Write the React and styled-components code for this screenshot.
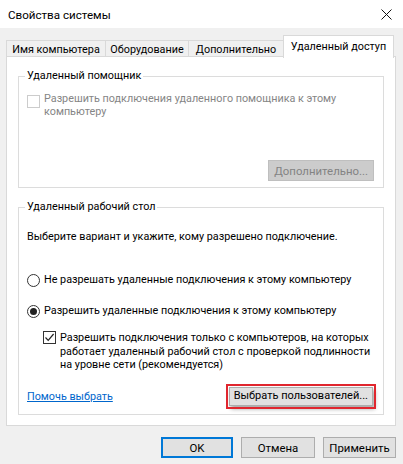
import React from "react";
import styled, { createGlobalStyle } from "styled-components";

const GlobalStyle = createGlobalStyle`
  html, body { margin: 0; padding: 0; }
  body {
    background: #f0f0f0;
    font-family: Roboto, "Liberation Sans", Arial, sans-serif;
    font-size: 10.8px;
    color: #000;
  }
  * { box-sizing: border-box; }
`;

const Window = styled.div`
  width: 403px;
  height: 464px;
  display: flex;
  flex-direction: column;
  background: #f0f0f0;
  overflow: hidden;
`;

const TitleBar = styled.div`
  height: 28px;
  background: #fff;
  display: flex;
  align-items: center;
  justify-content: space-between;
  padding: 1px 11px 0 8px;
  flex-shrink: 0;
`;

const Title = styled.span`
  font-size: 11.6px;
  line-height: 14px;
`;

const Body = styled.div`
  padding: 7px 7px 0 6px;
  display: flex;
  flex-direction: column;
`;

const TabStrip = styled.div`
  display: flex;
  align-items: flex-end;
  height: 22px;
`;

const Tab = styled.div`
  width: ${(p) => p.$w}px;
  height: ${(p) => (p.$active ? 23 : 17)}px;
  margin-left: ${(p) => (p.$active ? "-1px" : "0")};
  display: flex;
  justify-content: center;
  align-items: flex-start;
  padding-top: ${(p) => (p.$active ? "4px" : "2px")};
  line-height: 14px;
  white-space: nowrap;
  background: ${(p) => (p.$active ? "#fff" : "#f0f0f0")};
  border: 1px solid #d9d9d9;
  border-left-width: ${(p) => (p.$first || p.$active ? "1px" : "0")};
  border-bottom: ${(p) => (p.$active ? "none" : "1px solid #d9d9d9")};
  position: relative;
  z-index: ${(p) => (p.$active ? 2 : 0)};
  margin-bottom: ${(p) => (p.$active ? "-1px" : "0")};
`;

const Panel = styled.div`
  background: #fff;
  border: 1px solid #d9d9d9;
  height: 370px;
  margin-top: -1px;
  padding: 12px 11px 0 11px;
  display: flex;
  flex-direction: column;
  gap: 12px;
`;

const Group = styled.fieldset`
  margin: 0;
  min-width: 0;
  border: 1px solid #dcdcdc;
  padding: 0 9px ${(p) => p.$pb}px 8px;
  display: flex;
  flex-direction: column;
`;

const Legend = styled.legend`
  padding: 0 2px;
  margin-left: -2px;
  line-height: 14px;
`;

const Row = styled.div`
  display: flex;
  align-items: ${(p) => (p.$top ? "flex-start" : "center")};
  gap: 4px;
  margin-top: ${(p) => p.$mt || 0}px;
  margin-left: ${(p) => p.$indent || 0}px;
  line-height: ${(p) => p.$lh || 14}px;
  color: ${(p) => (p.$disabled ? "#858585" : "#000")};
  white-space: nowrap;
`;

const Box = styled.span`
  width: 13px;
  height: 13px;
  flex-shrink: 0;
  border: 1px solid ${(p) => (p.$disabled ? "#cccccc" : "#333")};
  background: #fff;
  display: flex;
  align-items: center;
  justify-content: center;
  margin-top: ${(p) => p.$mt || 0}px;
`;

const Radio = styled.span`
  width: 13px;
  height: 13px;
  flex-shrink: 0;
  border-radius: 50%;
  border: 1px solid #333;
  background: #fff;
  display: flex;
  align-items: center;
  justify-content: center;
  &::after {
    content: "";
    display: ${(p) => (p.$checked ? "block" : "none")};
    width: 7px;
    height: 7px;
    border-radius: 50%;
    background: #222;
  }
`;

const Text = styled.div`
  margin-top: ${(p) => p.$mt || 0}px;
  line-height: 14px;
  white-space: nowrap;
`;

const RightRow = styled.div`
  display: flex;
  justify-content: flex-end;
  margin-top: ${(p) => p.$mt || 0}px;
`;

const Button = styled.button`
  font: inherit;
  font-size: 11.4px;
  height: ${(p) => p.$h || 21}px;
  width: ${(p) => (p.$w ? `${p.$w}px` : "auto")};
  padding: 0 ${(p) => p.$px ?? 4}px;
  background: ${(p) => (p.$disabled ? "#cccccc" : "#e1e1e1")};
  color: ${(p) => (p.$disabled ? "#838383" : "#000")};
  border: 1px solid ${(p) => (p.$primary ? "#0078d7" : p.$disabled ? "#bfbfbf" : "#adadad")};
  box-shadow: ${(p) => (p.$primary ? "inset 0 0 0 1px #0078d7" : "none")};
  border-radius: 0;
  line-height: 14px;
  white-space: nowrap;
  text-align: center;
`;

const HighlightButton = styled(Button)`
  font-size: 11px;
  outline: 2px solid #e0262e;
  outline-offset: 1px;
  margin-right: 1px;
  box-shadow: 2px 3px 4px rgba(0, 0, 0, 0.35);
`;

const Link = styled.a`
  color: #0066cc;
  text-decoration: underline;
  cursor: pointer;
`;

const BottomRow = styled.div`
  display: flex;
  justify-content: space-between;
  align-items: center;
  margin-top: ${(p) => p.$mt || 0}px;
`;

const Footer = styled.div`
  display: flex;
  justify-content: flex-end;
  gap: 8px;
  padding: 11px 0 0;
`;

const Check = () => (
  <svg width="11" height="11" viewBox="0 0 11 11">
    <path d="M1.5 5.5 L4.2 8.3 L9.6 2" fill="none" stroke="#222" strokeWidth="1.2" />
  </svg>
);

const CloseIcon = () => (
  <svg width="11" height="11" viewBox="0 0 11 11">
    <path d="M0.5 0.5 L10.5 10.5 M10.5 0.5 L0.5 10.5" stroke="#111" strokeWidth="1" fill="none" />
  </svg>
);

export default function App() {
  return (
    <>
      <GlobalStyle />
      <Window>
        <TitleBar>
          <Title>Свойства системы</Title>
          <CloseIcon />
        </TitleBar>
        <Body>
          <TabStrip>
            <Tab $first $w={100}>Имя компьютера</Tab>
            <Tab $w={83}>Оборудование</Tab>
            <Tab $w={95}>Дополнительно</Tab>
            <Tab $active $w={111}>Удаленный доступ</Tab>
          </TabStrip>
          <Panel>
            <Group $pb={6}>
              <Legend>Удаленный помощник</Legend>
              <Row $top $disabled $mt={9} $lh={13}>
                <Box $disabled $mt={3} />
                <div>
                  Разрешить подключения удаленного помощника к этому
                  <br />
                  компьютеру
                </div>
              </Row>
              <RightRow $mt={42}>
                <Button $disabled $px={5}>Дополнительно...</Button>
              </RightRow>
            </Group>
            <Group $pb={8}>
              <Legend>Удаленный рабочий стол</Legend>
              <Text $mt={16}>Выберите вариант и укажите, кому разрешено подключение.</Text>
              <Row $mt={29}>
                <Radio />
                <span>Не разрешать удаленные подключения к этому компьютеру</span>
              </Row>
              <Row $mt={17}>
                <Radio $checked />
                <span>Разрешить удаленные подключения к этому компьютеру</span>
              </Row>
              <Row $top $indent={16} $mt={13} $lh={13.5}>
                <Box $mt={0}>
                  <Check />
                </Box>
                <div>
                  Разрешить подключения только с компьютеров, на которых
                  <br />
                  работает удаленный рабочий стол с проверкой подлинности
                  <br />
                  на уровне сети (рекомендуется)
                </div>
              </Row>
              <BottomRow $mt={15}>
                <Link>Помочь выбрать</Link>
                <HighlightButton $h={19} $px={4}>Выбрать пользователей...</HighlightButton>
              </BottomRow>
            </Group>
          </Panel>
          <Footer>
            <Button $primary $w={72}>OK</Button>
            <Button $w={74}>Отмена</Button>
            <Button $w={73}>Применить</Button>
          </Footer>
        </Body>
      </Window>
    </>
  );
}
